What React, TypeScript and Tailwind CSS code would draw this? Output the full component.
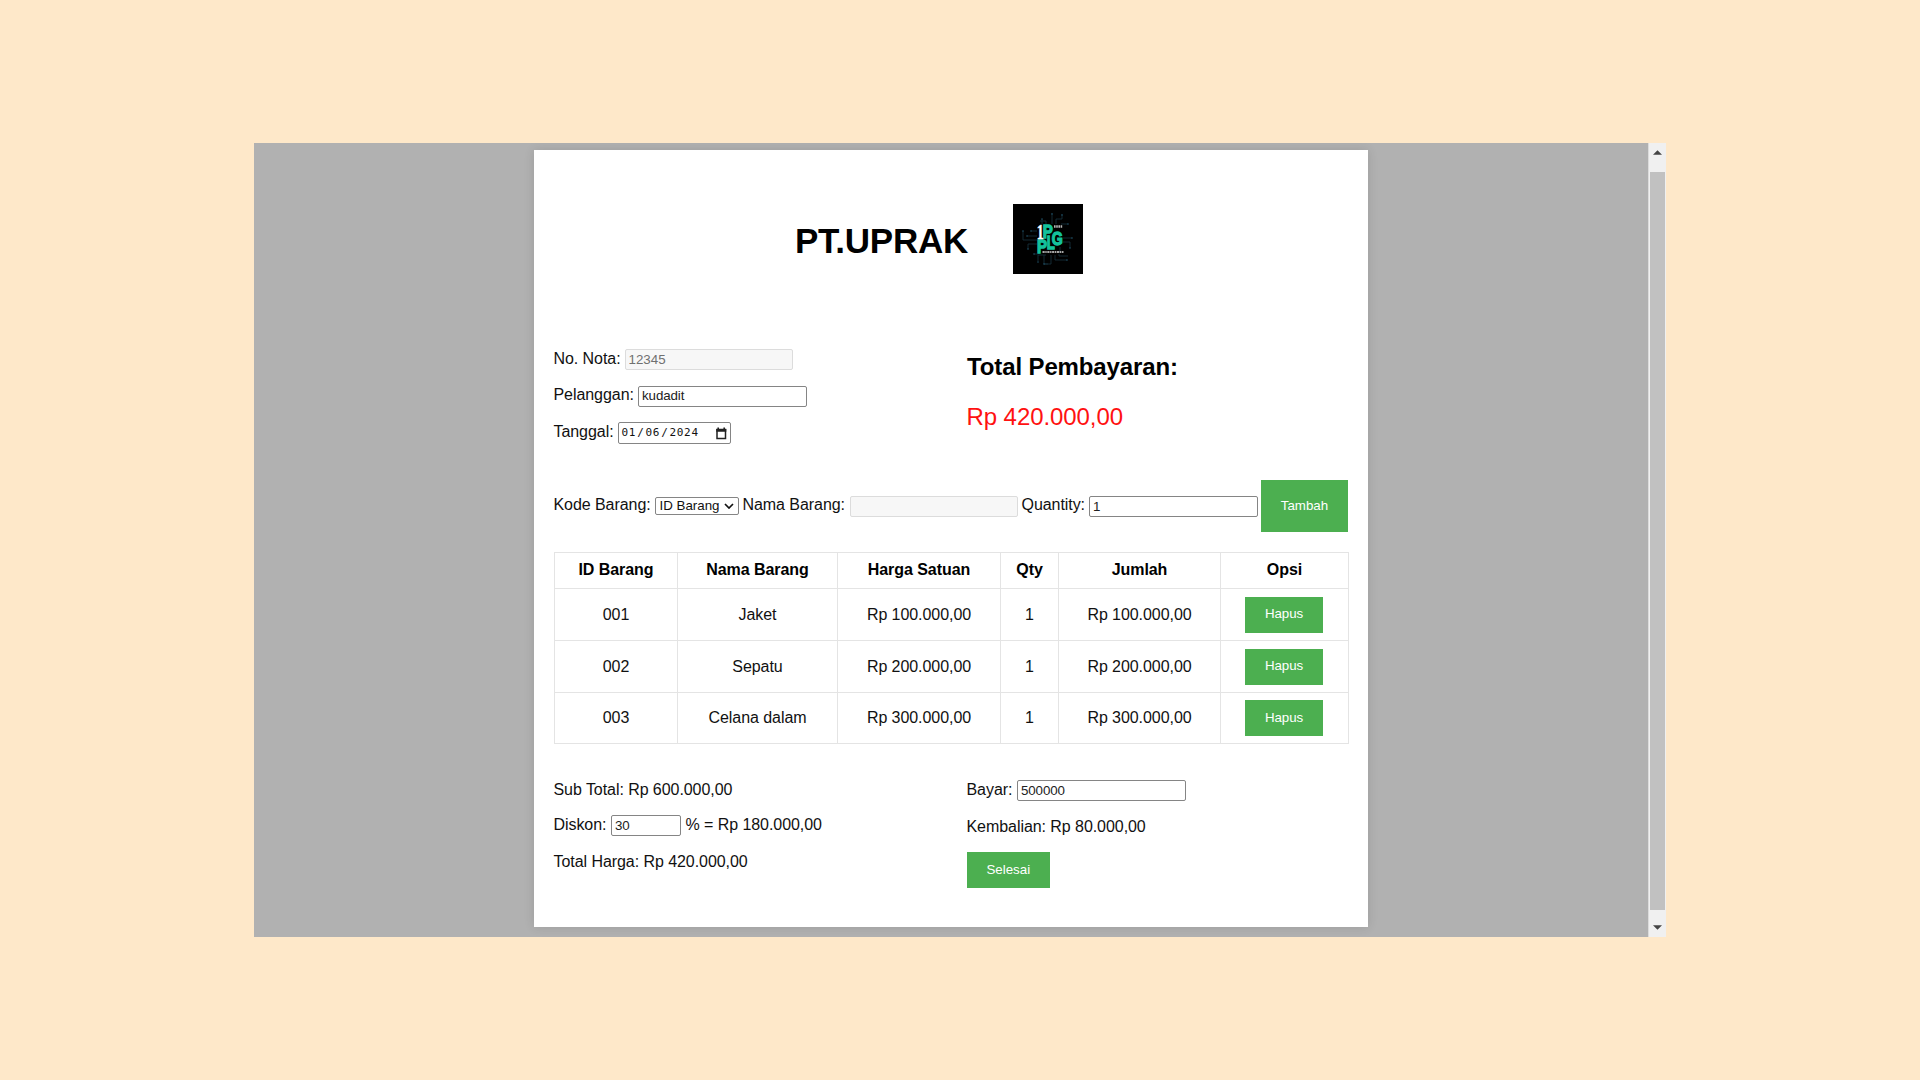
import type { ReactNode } from 'react';

const items = [
  { id: '001', name: 'Jaket', price: 'Rp 100.000,00', qty: 1, total: 'Rp 100.000,00' },
  { id: '002', name: 'Sepatu', price: 'Rp 200.000,00', qty: 1, total: 'Rp 200.000,00' },
  { id: '003', name: 'Celana dalam', price: 'Rp 300.000,00', qty: 1, total: 'Rp 300.000,00' },
];

const field =
  'h-[21px] shrink-0 rounded-[2px] border border-[#858585] bg-white px-[3px] text-[13.333px] leading-[18px] tracking-[-0.1px] text-[#222] outline-none';
const disabledField =
  'h-[21px] shrink-0 rounded-[2px] border border-[#dcdcdc] bg-[#f7f7f7] px-[2.5px] text-[13.333px] leading-[19px] text-[#707070] outline-none';

function Label({ children, className = '' }: { children: ReactNode; className?: string }) {
  return (
    <span className={`-ml-[0.5px] shrink-0 whitespace-pre text-[16px] leading-[20px] tracking-[-0.06px] ${className}`}>
      {children}
    </span>
  );
}

function Button({ children, className = '' }: { children: ReactNode; className?: string }) {
  return (
    <button className={`shrink-0 bg-[#4caf50] text-center text-[13.333px] leading-[16px] text-white ${className}`}>
      {children}
    </button>
  );
}

function Logo() {
  return (
    <svg viewBox="0 0 70 70" className="size-[70px] shrink-0 bg-black">
      <g fill="none" stroke="#17323f" strokeWidth="0.8">
        <path d="M18 27h6M10 27v9h14M14 32h10M15 45V40h9M21 50h4M25 57v-6h8M35 60h-4v-9M31 60h7v-9M42 51v5h12M46 50v2h9M47 43v5h-3M50 38h7v6M50 34h9M43 20V15h6v-5M39 20V9M29 20v-5M48 20h7M33 20v-3h-6" />
      </g>
      <g fill="#1f5066">
        <circle cx="10" cy="27" r="0.8" /><circle cx="14" cy="32" r="0.8" /><circle cx="18" cy="27" r="0.8" />
        <circle cx="15" cy="45" r="0.8" /><circle cx="21" cy="50" r="0.8" /><circle cx="25" cy="58" r="0.8" />
        <circle cx="39" cy="10" r="0.8" /><circle cx="49" cy="11" r="0.8" /><circle cx="55" cy="20" r="0.8" />
        <circle cx="59" cy="34" r="0.8" /><circle cx="57" cy="44" r="0.8" /><circle cx="54" cy="56" r="0.8" />
        <circle cx="29" cy="15" r="0.8" /><circle cx="31" cy="60" r="0.8" />
      </g>
      <g fontFamily="Liberation Sans, sans-serif" fontWeight="bold" fill="#14c29c" stroke="#14c29c" strokeWidth="1.3" fontSize="18">
        <text x="29.8" y="34.3" textLength="10" lengthAdjust="spacingAndGlyphs">P</text>
        <text x="33.8" y="44.7" textLength="8" lengthAdjust="spacingAndGlyphs">L</text>
        <text x="24" y="49" textLength="10" lengthAdjust="spacingAndGlyphs">P</text>
        <text x="38.8" y="41" textLength="11" lengthAdjust="spacingAndGlyphs">G</text>
      </g>
      <text x="23.7" y="35" fontFamily="Liberation Serif, serif" fontWeight="bold" fontSize="20" fill="#fff" stroke="#fff" strokeWidth="0.4" textLength="7" lengthAdjust="spacingAndGlyphs">1</text>
      <path d="M41 22.5h8.5" stroke="#b5b5b5" strokeWidth="2.6" strokeDasharray="1.6 .6" />
      <path d="M29.5 48h21" stroke="#a5a5a5" strokeWidth="1.8" strokeDasharray="2.2 .6 1.4 .6" />
    </svg>
  );
}

const cell = 'border border-[#e4e4e4] p-0 text-center';

export default function App() {
  return (
    <div className="h-[1080px] w-[1920px] overflow-hidden bg-[#fee8c9] pl-[254px] pt-[143px] font-['Liberation_Sans',Arial,sans-serif] text-[#111]">
      <div className="flex h-[794px] w-[1412px] overflow-hidden">
        <div className="w-[1394px] shrink-0 bg-[#b1b1b1] pl-[280px] pt-[7px]">
          <main className="flex h-[776.5px] w-[834px] flex-col bg-white px-[20px] shadow-[0_0_10px_rgba(0,0,0,0.12)]">
            <header className="flex h-[194px] shrink-0 pl-[241px] pt-[54px]">
              <h1 className="w-[218px] pt-[17px] text-[35px] font-bold leading-[40px] tracking-[-0.25px] text-black">PT.UPRAK</h1>
              <Logo />
            </header>

            <section className="flex h-[135px] shrink-0">
              <div className="w-[413px]">
                <div className="flex h-[37px]">
                  <Label className="mt-[5px] w-[71.5px]">No. Nota:</Label>
                  <input className={`${disabledField} mt-[5px] w-[168px]`} defaultValue="12345" disabled />
                </div>
                <div className="flex h-[36px]">
                  <Label className="mt-[4px] w-[84.5px]">Pelanggan:</Label>
                  <input className={`${field} mt-[5px] w-[168.5px] pb-[3px]`} defaultValue="kudadit" />
                </div>
                <div className="flex">
                  <Label className="mt-[5px] w-[64px]">Tanggal:</Label>
                  <div className="mt-[5px] flex h-[22px] w-[113.5px] items-center justify-between rounded-[2px] border border-[#858585] px-[3px]">
                    <span className="flex font-['DejaVu_Sans_Mono',monospace] text-[11px] leading-[20px] tracking-[0.7px]">
                      <span>01</span><span className="mx-[1px]">/</span><span>06</span><span className="mx-[1px]">/</span><span>2024</span>
                    </span>
                    <svg viewBox="0 0 12 13" className="h-[13px] w-[12px]">
                      <path d="M2 2.5h8.5v9H2z" fill="none" stroke="#222" strokeWidth="1.5" />
                      <path d="M1.3 2h10v2.8h-10zM2.4 .6h1.6v2H2.4zM8.4 .6H10v2H8.4z" fill="#222" />
                    </svg>
                  </div>
                </div>
              </div>
              <div>
                <h2 className="mt-[9px] text-[24px] font-bold leading-[28px] tracking-[-0.12px] text-black">Total Pembayaran:</h2>
                <p className="-ml-[0.5px] mt-[22px] text-[24px] leading-[28px] tracking-[-0.08px] text-[#f11]">Rp 420.000,00</p>
              </div>
            </section>

            <section className="flex h-[73px] shrink-0">
              <Label className="mt-[16px] w-[101.5px]">Kode Barang:</Label>
              <div className="mt-[18px] flex h-[18px] w-[84px] shrink-0 items-center rounded-[2px] border border-[#858585] pl-[3.5px] text-[13.333px] leading-[16px]">
                ID Barang
                <svg viewBox="0 0 10 6" className="ml-[4px] h-[6px] w-[10px]">
                  <path d="M1 1l4 4 4-4" fill="none" stroke="#111" strokeWidth="1.7" />
                </svg>
              </div>
              <Label className="ml-[3.5px] mt-[16px] w-[107.5px]">Nama Barang:</Label>
              <input className={`${disabledField} mt-[17px] w-[168px]`} disabled />
              <Label className="ml-[3.5px] mt-[16px] w-[67.5px]">Quantity:</Label>
              <input className={`${field} mt-[17px] w-[169px]`} defaultValue="1" />
              <Button className="ml-[3px] mt-[0.7px] h-[52.3px] w-[87px]">Tambah</Button>
            </section>

            <table className="w-[794px] shrink-0 table-fixed border-collapse text-[16px] leading-[20px] tracking-[-0.06px]">
              <colgroup>
                <col className="w-[123px]" /><col className="w-[160px]" /><col className="w-[163px]" />
                <col className="w-[58px]" /><col className="w-[162px]" /><col className="w-[128px]" />
              </colgroup>
              <thead>
                <tr className="h-[36px]">
                  {['ID Barang', 'Nama Barang', 'Harga Satuan', 'Qty', 'Jumlah', 'Opsi'].map((h) => (
                    <th key={h} className={`${cell} pb-[1px] font-bold text-black`}>{h}</th>
                  ))}
                </tr>
              </thead>
              <tbody>
                {items.map((it, i) => (
                  <tr key={it.id} className={i === 2 ? 'h-[51px]' : 'h-[52px]'}>
                    <td className={cell}>{it.id}</td>
                    <td className={cell}>{it.name}</td>
                    <td className={cell}>{it.price}</td>
                    <td className={cell}>{it.qty}</td>
                    <td className={cell}>{it.total}</td>
                    <td className={cell}>
                      <Button className="ml-[24px] block h-[36px] w-[78px] pb-[1px]">Hapus</Button>
                    </td>
                  </tr>
                ))}
              </tbody>
            </table>

            <section className="flex pt-[36px]">
              <div className="w-[413px]">
                <div className="flex h-[35px]"><Label>Sub Total: Rp 600.000,00</Label></div>
                <div className="flex h-[37px]">
                  <Label className="w-[57.5px]">Diskon:</Label>
                  <input className={`${field} w-[70px]`} defaultValue="30" />
                  <Label className="ml-[4.5px]">% = Rp 180.000,00</Label>
                </div>
                <div className="flex"><Label>Total Harga: Rp 420.000,00</Label></div>
              </div>
              <div>
                <div className="flex h-[37px]">
                  <Label className="w-[50.5px]">Bayar:</Label>
                  <input className={`${field} w-[168.5px]`} defaultValue="500000" />
                </div>
                <div className="flex h-[35px]"><Label>Kembalian: Rp 80.000,00</Label></div>
                <Button className="-ml-[0.5px] h-[36px] w-[83.5px] pb-[1px]">Selesai</Button>
              </div>
            </section>
          </main>
        </div>
        <aside className="flex w-[18px] shrink-0 flex-col items-center border-l border-[#dcdcdc] bg-[#f0f0f0]">
          <div className="flex h-[29px] shrink-0 items-center justify-center">
            <svg viewBox="0 0 10 5" className="mb-[10px] h-[5px] w-[9px]"><path d="M5 0l5 5H0z" fill="#444" /></svg>
          </div>
          <div className="w-[15px] grow bg-[#c1c1c1]" />
          <div className="flex h-[27px] shrink-0 items-center justify-center">
            <svg viewBox="0 0 10 5" className="mt-[8px] h-[5px] w-[9px]"><path d="M0 0h10L5 5z" fill="#444" /></svg>
          </div>
        </aside>
      </div>
    </div>
  );
}
